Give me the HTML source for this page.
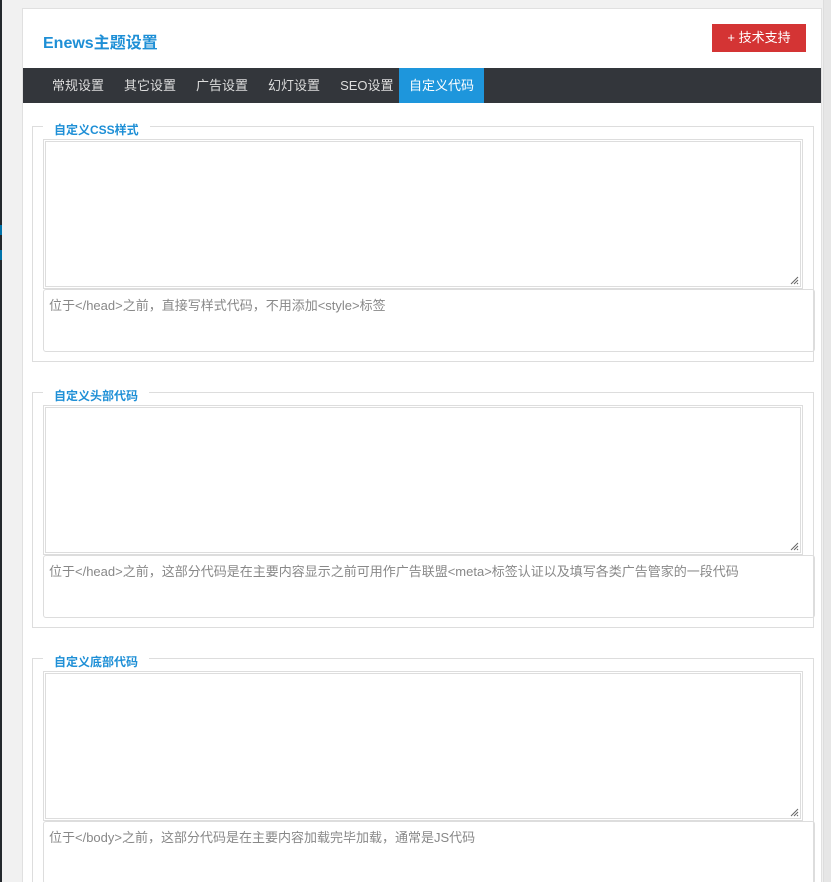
<!DOCTYPE html>
<html><head><meta charset="utf-8"><style>
*{box-sizing:border-box;margin:0;padding:0}
html,body{width:831px;height:882px;overflow:hidden}
body{background:#f1f1f1;font-family:"Liberation Sans","Noto Sans CJK SC",sans-serif;position:relative}
.lbar{position:absolute;left:0;top:0;width:2px;height:882px;background:#23282d}
.lbar i{position:absolute;left:0;width:2px;height:10px;background:#0073aa}
.rs{position:absolute;left:823px;top:0;width:8px;height:882px;background:#e6e6e6;border-left:1px solid #ddd}
.panel{position:absolute;left:22px;top:8px;width:800px;height:874px;background:#fff;border:1px solid #e0e0e0;border-bottom:none;overflow:hidden}
.title{position:absolute;left:20px;top:20px;font-size:16px;font-weight:bold;color:#1e8fd6}
.btn{position:absolute;left:689px;top:15px;width:94px;height:28px;background:#d43434;color:#fff;font-size:13px;text-align:center;line-height:28px}
.nav{position:absolute;left:-1px;top:59px;width:800px;height:35px;background:#33363b}
.nav span{float:left;height:35px;line-height:35px;color:#ddd;font-size:13px;padding:0 10px;white-space:nowrap}
.nav span:first-child{margin-left:20px}
.nav span.s{width:69px;padding:0 0 0 10px;overflow:hidden}
.nav span.a{background:#1e96dc;color:#fff;width:85px;padding:0;text-align:center}
.fs{position:absolute;left:9px;width:782px;height:236px;border:1px solid #ddd}
.lg{position:absolute;left:10px;top:-4px;background:#fff;padding:0 11px;font-size:12px;font-weight:bold;color:#1e8fd6;line-height:14px}
.ta{position:absolute;left:10px;top:12px;width:760px;height:150px;border:1px solid #ddd;padding:1px}
.ta div{width:100%;height:100%;border:1px solid #ddd;position:relative}
.ta svg{position:absolute;right:1px;bottom:1px}
.ds{position:absolute;left:10px;top:162px;width:772px;height:63px;border:1px solid #ddd;border-radius:3px;font-size:13px;color:#888;padding:5px 5px}
</style></head><body>
<div class="lbar"><i style="top:225px"></i><i style="top:250px"></i></div>
<div class="rs"></div>
<div class="panel">
<div class="title">Enews主题设置</div>
<div class="btn">+ 技术支持</div>
<div class="nav"><span>常规设置</span><span>其它设置</span><span>广告设置</span><span>幻灯设置</span><span class="s">SEO设置</span><span class="a">自定义代码</span></div>

<div class="fs" style="top:117px"><div class="lg">自定义CSS样式</div>
<div class="ta"><div><svg width="9" height="9"><path d="M1 8L8 1M4 8L8 4M7 8L8 7" stroke="#666" stroke-width="1"/></svg></div></div>
<div class="ds">位于&lt;/head&gt;之前，直接写样式代码，不用添加&lt;style&gt;标签</div></div>

<div class="fs" style="top:383px"><div class="lg">自定义头部代码</div>
<div class="ta"><div><svg width="9" height="9"><path d="M1 8L8 1M4 8L8 4M7 8L8 7" stroke="#666" stroke-width="1"/></svg></div></div>
<div class="ds">位于&lt;/head&gt;之前，这部分代码是在主要内容显示之前可用作广告联盟&lt;meta&gt;标签认证以及填写各类广告管家的一段代码</div></div>

<div class="fs" style="top:649px"><div class="lg">自定义底部代码</div>
<div class="ta"><div><svg width="9" height="9"><path d="M1 8L8 1M4 8L8 4M7 8L8 7" stroke="#666" stroke-width="1"/></svg></div></div>
<div class="ds">位于&lt;/body&gt;之前，这部分代码是在主要内容加载完毕加载，通常是JS代码</div></div>
</div>
</body></html>
